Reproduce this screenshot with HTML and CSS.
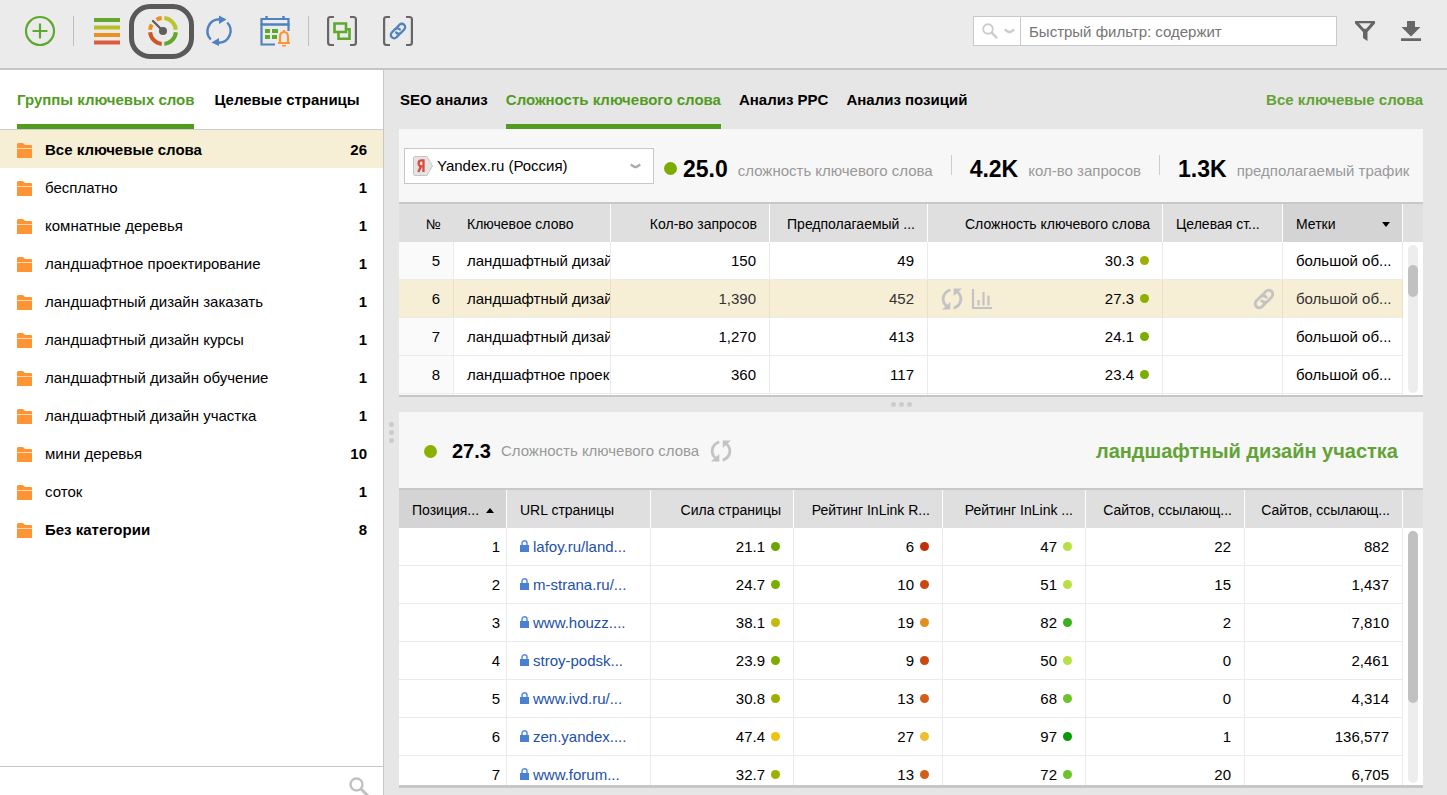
FILE: index.html
```html
<!DOCTYPE html>
<html lang="ru">
<head>
<meta charset="utf-8">
<title>Сложность ключевого слова</title>
<link rel="stylesheet" href="styles.css">
</head>
<body>
<svg class="defs" aria-hidden="true">
  <symbol id="folder" viewBox="0 0 15 15"><path fill="#ff9434" d="M0 1.5Q0 0 1.500 0h3.600q1 0 1.500.6L8 2h6q1 0 1 1v2H0z"/><path fill="#ffd9b5" d="M0 5h15v1H0z"/><path fill="#ff9434" d="M0 6h15v9H0z"/></symbol>
  <symbol id="lock" viewBox="0 0 9 12"><path fill="none" stroke="#5b8ed8" stroke-width="1.500" d="M2 6V3.300a2.500 2.500 0 0 1 5 0V6"/><path fill="#4a80d0" d="M0 5h9v7H0z"/></symbol>
  <symbol id="sync" viewBox="0 0 22 22"><g fill="none" stroke="#c3c3c3" stroke-width="2.800"><path d="M9.300 1.800C.2 5.500.8 14 5.500 18"/><path d="M12.700 20.200C21.800 16.500 21.200 8 16.500 4"/></g><path fill="#c3c3c3" d="M1 21.500h8.300V14zM21 .5h-8.300V8z"/></symbol>
  <symbol id="chain" viewBox="0 0 20 20"><g fill="none" stroke-width="2.600" stroke-linecap="round"><path d="M8.200 6.800l3.400-3.700a3.700 3.700 0 0 1 5.300 5.200L13.300 12a3.700 3.700 0 0 1-5.300-.4"/><path d="M11.800 13.200l-3.400 3.700a3.700 3.700 0 0 1-5.300-5.200L6.700 8a3.700 3.700 0 0 1 5.300.4"/></g></symbol>
  <symbol id="glass" viewBox="0 0 20 20"><circle cx="7.500" cy="7.500" r="6" fill="none" stroke="currentColor" stroke-width="2.400"/><path d="M11.800 11.800L18.800 18.800" stroke="currentColor" stroke-width="3"/></symbol>
  <symbol id="chevron" viewBox="0 0 12 6"><path fill="none" stroke="currentColor" stroke-width="2.600" d="M.8 1.300L4.500 3.700Q6 4.600 7.500 3.700L11.200 1.300"/></symbol>
</svg>

<header class="toolbar">
  <div class="tools">
    <button class="tool" aria-label="Добавить"><svg viewBox="0 0 32 32"><circle cx="16" cy="16" r="14" fill="none" stroke="#5fa82e" stroke-width="2.200"/><path d="M16 8.500v15M8.500 16h15" stroke="#5fa82e" stroke-width="2.200"/></svg></button>
    <span class="divider"></span>
    <button class="tool" aria-label="Группы"><svg viewBox="0 0 32 32"><path fill="#62a82f" d="M3 3h26v4H3z"/><path fill="#b9be29" d="M3 10.500h26v4H3z"/><path fill="#ec901f" d="M3 18h26v4H3z"/><path fill="#df5a3c" d="M3 25.500h26v4H3z"/></svg></button>
    <button class="tool tool-current" aria-label="Сложность"><svg viewBox="0 0 32 32"><g fill="none" stroke-width="4"><path stroke="#bcc32f" d="M17.300 3.100A13 13 0 0 1 28.900 14.700"/><path stroke="#62a82f" d="M28.900 17.300A13 13 0 0 1 17.300 28.900"/><path stroke="#cf5625" d="M14.700 28.900A13 13 0 0 1 3.100 17.300"/><path stroke="#ec8f22" d="M3.100 14.700A13 13 0 0 1 4.700 9.500M9.500 4.700A13 13 0 0 1 14.700 3.100"/></g><path d="M6 6L16 16" stroke="#5e5e5e" stroke-width="2.400" stroke-linecap="round"/><circle cx="16" cy="16" r="4" fill="#5e5e5e"/></svg></button>
    <button class="tool" aria-label="Обновить"><svg viewBox="0 0 32 32"><g fill="none" stroke="#4f82bf" stroke-width="2.400"><path d="M7.800 24.500A12 12 0 0 1 16 4.200"/><path d="M24.200 7.500A12 12 0 0 1 16 27.800"/></g><path fill="#4f82bf" d="M16 .5l7.500 4L16 9zM16 23l-7.500 4.500L16 31z"/></svg></button>
    <button class="tool" aria-label="Расписание"><svg viewBox="0 0 32 32"><g fill="none" stroke="#4f82bf"><path stroke-width="2.200" d="M16 29.500H2.500V4h27v12"/><path stroke-width="2.400" d="M1.500 9.500h29M7.500 1v4M24.500 1v4"/></g><path fill="#5fa82e" d="M6 14h5v4H6zM13 14h6v4h-6zM6 20h5v4H6zM13 20h5v4h-5z"/><path fill="none" stroke="#ff9434" stroke-width="2.200" d="M19 28h12M21 27v-5q0-5 4-5t4 5v5M25 17v-2"/><path fill="#ff9434" d="M23 30h4v1.500h-4z"/></svg></button>
    <span class="divider"></span>
    <button class="tool" aria-label="Сопоставить"><svg viewBox="0 0 32 32"><path fill="none" stroke="#666" stroke-width="2.200" d="M8 2H4.500Q2.100 2 2.100 4.500v23Q2.100 30 4.500 30H8M24 2h3.500Q29.900 2 29.900 4.500v23Q29.900 30 27.500 30H24"/><path fill="none" stroke="#5fa82e" stroke-width="2.600" d="M12.500 14.500v9.200h11v-9.500h-3"/><path fill="#ebebeb" stroke="#5fa82e" stroke-width="2.600" d="M8.500 8.500h11.500v8.500H8.500z"/></svg></button>
    <button class="tool" aria-label="Ссылка"><svg viewBox="0 0 32 32"><path fill="none" stroke="#666" stroke-width="2.200" d="M8 2H4.500Q2.100 2 2.100 4.500v23Q2.100 30 4.500 30H8M24 2h3.500Q29.900 2 29.900 4.500v23Q29.900 30 27.500 30H24"/><use href="#chain" x="7" y="7" width="18" height="18" stroke="#4f82bf"/></svg></button>
  </div>
  <div class="filter">
    <button class="filter-mode" aria-label="Режим фильтра"><svg class="i-glass"><use href="#glass"/></svg><svg class="i-chevron"><use href="#chevron"/></svg></button>
    <input class="filter-input" type="text" aria-label="Быстрый фильтр" placeholder="Быстрый фильтр: содержит">
  </div>
  <button class="action" aria-label="Фильтр"><svg viewBox="0 0 22 22"><path fill="#666" fill-rule="evenodd" d="M1 1h20v2.500L13.500 12v9L9 18v-6L1 3.500zM5 3.300l4.800 5.500h2.500L17 3.300z"/></svg></button>
  <button class="action" aria-label="Скачать"><svg viewBox="0 0 22 22"><path fill="#666" d="M7 1h8v6h5.500L11 16.500 1.500 7H7zM1 18.300h20V21H1z"/></svg></button>
</header>

<div class="workspace">
  <aside class="sidebar">
    <nav class="tabs side-tabs"><a class="tab active" href="#groups">Группы ключевых слов</a><a class="tab" href="#pages">Целевые страницы</a></nav>
    <ul class="groups">
      <li class="group selected strong"><svg><use href="#folder"/></svg><span>Все ключевые слова</span><b>26</b></li>
      <li class="group"><svg><use href="#folder"/></svg><span>бесплатно</span><b>1</b></li>
      <li class="group"><svg><use href="#folder"/></svg><span>комнатные деревья</span><b>1</b></li>
      <li class="group"><svg><use href="#folder"/></svg><span>ландшафтное проектирование</span><b>1</b></li>
      <li class="group"><svg><use href="#folder"/></svg><span>ландшафтный дизайн заказать</span><b>1</b></li>
      <li class="group"><svg><use href="#folder"/></svg><span>ландшафтный дизайн курсы</span><b>1</b></li>
      <li class="group"><svg><use href="#folder"/></svg><span>ландшафтный дизайн обучение</span><b>1</b></li>
      <li class="group"><svg><use href="#folder"/></svg><span>ландшафтный дизайн участка</span><b>1</b></li>
      <li class="group"><svg><use href="#folder"/></svg><span>мини деревья</span><b>10</b></li>
      <li class="group"><svg><use href="#folder"/></svg><span>соток</span><b>1</b></li>
      <li class="group strong"><svg><use href="#folder"/></svg><span>Без категории</span><b>8</b></li>
    </ul>
    <div class="side-footer"><button aria-label="Поиск"><svg><use href="#glass"/></svg></button></div>
  </aside>

  <div class="splitter-v"><i></i><i></i><i></i></div>

  <main class="main">
    <nav class="tabs main-tabs"><a class="tab" href="#seo">SEO анализ</a><a class="tab active" href="#difficulty">Сложность ключевого слова</a><a class="tab" href="#ppc">Анализ PPC</a><a class="tab" href="#rank">Анализ позиций</a><a class="all-link" href="#all">Все ключевые слова</a></nav>

    <section class="panel panel-top">
      <div class="summary">
        <div class="engine">
          <svg class="engine-icon" viewBox="0 0 20 20"><path fill="#e4e4e4" stroke="#c6c6c6" d="M2 .5h12l5.500 9.500L14 19.500H2Q.5 19.500.5 18V2Q.5.5 2 .5z"/><path fill="none" stroke="#dd4a3c" stroke-width="2.300" d="M10.500 16V4.300H8.500Q5.600 4.300 5.600 7.300T8.500 10.300h2M8 10.300L5.300 16"/></svg>
          <select class="engine-select" aria-label="Поисковая система"><option>Yandex.ru (Россия)</option></select>
          <svg class="engine-arrow i-chevron"><use href="#chevron"/></svg>
        </div>
        <div class="stat"><i class="dot big c24"></i><strong>25.0</strong><span>сложность ключевого слова</span></div>
        <div class="stat"><strong>4.2K</strong><span>кол-во запросов</span></div>
        <div class="stat"><strong>1.3K</strong><span>предполагаемый трафик</span></div>
      </div>
      <div class="scroll">
        <table class="grid keywords">
          <colgroup><col class="w55"><col class="w157"><col class="w159"><col class="w158"><col class="w235"><col class="w120"><col class="w120"><col class="w20"></colgroup>
          <thead><tr><th class="num plain">№</th><th>Ключевое слово</th><th class="num">Кол-во запросов</th><th class="num">Предполагаемый ...</th><th class="num">Сложность ключевого слова</th><th>Целевая ст...</th><th class="sorted"><span class="head">Метки<i class="down"></i></span></th><th class="end"></th></tr></thead>
          <tbody>
            <tr><td class="num idx">5</td><td class="clip">ландшафтный дизайн</td><td class="num">150</td><td class="num">49</td><td class="num">30.3<i class="dot c30"></i></td><td></td><td>большой об...</td><td class="end"></td></tr>
            <tr class="selected"><td class="num idx">6</td><td class="clip">ландшафтный дизайн</td><td class="num soft">1,390</td><td class="num soft">452</td><td class="num"><div class="metric"><svg class="i22"><use href="#sync"/></svg><svg class="i22" viewBox="0 0 22 22"><path fill="none" stroke="#c3c3c3" stroke-width="2.200" d="M2 1v19h19M7.500 17.500V12M12.500 17.500V4M17.500 17.500V7.500"/></svg><span>27.3<i class="dot c27"></i></span></div></td><td class="num tight"><svg class="i22 link-icon"><use href="#chain"/></svg></td><td class="soft">большой об...</td><td class="end"></td></tr>
            <tr><td class="num idx">7</td><td class="clip">ландшафтный дизайн</td><td class="num">1,270</td><td class="num">413</td><td class="num">24.1<i class="dot c24"></i></td><td></td><td>большой об...</td><td class="end"></td></tr>
            <tr><td class="num idx">8</td><td class="clip">ландшафтное проект</td><td class="num">360</td><td class="num">117</td><td class="num">23.4<i class="dot c24"></i></td><td></td><td>большой об...</td><td class="end"></td></tr>
            <tr><td class="idx"></td><td></td><td></td><td></td><td></td><td></td><td></td><td class="end"></td></tr>
          </tbody>
        </table>
        <div class="bar"><i class="thumb-small"></i></div>
      </div>
    </section>

    <div class="splitter-h"><i></i><i></i><i></i></div>

    <section class="panel panel-bottom">
      <div class="details"><i class="dot big c27"></i><strong>27.3</strong><span>Сложность ключевого слова</span><button aria-label="Обновить сложность"><svg class="i22"><use href="#sync"/></svg></button><h2>ландшафтный дизайн участка</h2></div>
      <div class="scroll">
        <table class="grid pages">
          <colgroup><col class="w108"><col class="w144"><col class="w143"><col class="w149"><col class="w143"><col class="w159"><col class="w158"><col class="w20"></colgroup>
          <thead><tr><th class="sorted"><span class="head">Позиция...<i class="up"></i></span></th><th>URL страницы</th><th class="num">Сила страницы</th><th class="num">Рейтинг InLink R...</th><th class="num">Рейтинг InLink ...</th><th class="num">Сайтов, ссылающ...</th><th class="num">Сайтов, ссылающ...</th><th class="end"></th></tr></thead>
          <tbody>
            <tr><td class="num pos">1</td><td><svg class="lock"><use href="#lock"/></svg><a href="#p1">lafoy.ru/land...</a></td><td class="num">21.1<i class="dot c21"></i></td><td class="num">6<i class="dot r6"></i></td><td class="num">47<i class="dot g50"></i></td><td class="num">22</td><td class="num">882</td><td class="end"></td></tr>
            <tr><td class="num pos">2</td><td><svg class="lock"><use href="#lock"/></svg><a href="#p2">m-strana.ru/...</a></td><td class="num">24.7<i class="dot c24"></i></td><td class="num">10<i class="dot r10"></i></td><td class="num">51<i class="dot g50"></i></td><td class="num">15</td><td class="num">1,437</td><td class="end"></td></tr>
            <tr><td class="num pos">3</td><td><svg class="lock"><use href="#lock"/></svg><a href="#p3">www.houzz....</a></td><td class="num">38.1<i class="dot c38"></i></td><td class="num">19<i class="dot r19"></i></td><td class="num">82<i class="dot g82"></i></td><td class="num">2</td><td class="num">7,810</td><td class="end"></td></tr>
            <tr><td class="num pos">4</td><td><svg class="lock"><use href="#lock"/></svg><a href="#p4">stroy-podsk...</a></td><td class="num">23.9<i class="dot c24"></i></td><td class="num">9<i class="dot r10"></i></td><td class="num">50<i class="dot g50"></i></td><td class="num">0</td><td class="num">2,461</td><td class="end"></td></tr>
            <tr><td class="num pos">5</td><td><svg class="lock"><use href="#lock"/></svg><a href="#p5">www.ivd.ru/...</a></td><td class="num">30.8<i class="dot c30"></i></td><td class="num">13<i class="dot r13"></i></td><td class="num">68<i class="dot g70"></i></td><td class="num">0</td><td class="num">4,314</td><td class="end"></td></tr>
            <tr><td class="num pos">6</td><td><svg class="lock"><use href="#lock"/></svg><a href="#p6">zen.yandex....</a></td><td class="num">47.4<i class="dot c47"></i></td><td class="num">27<i class="dot r27"></i></td><td class="num">97<i class="dot g97"></i></td><td class="num">1</td><td class="num">136,577</td><td class="end"></td></tr>
            <tr><td class="num pos">7</td><td><svg class="lock"><use href="#lock"/></svg><a href="#p7">www.forum...</a></td><td class="num">32.7<i class="dot c30"></i></td><td class="num">13<i class="dot r13"></i></td><td class="num">72<i class="dot g70"></i></td><td class="num">20</td><td class="num">6,705</td><td class="end"></td></tr>
          </tbody>
        </table>
        <div class="bar"><i class="thumb-large"></i></div>
      </div>
    </section>
  </main>
</div>
</body>
</html>
```
FILE: styles.css
```css
* { box-sizing: border-box; }
body {
  margin: 0;
  height: 100vh;
  display: flex;
  flex-direction: column;
  overflow: hidden;
  background: #e6e6e6;
  color: #000;
  font: 15px/20px "Liberation Sans", Arial, sans-serif;
}
.defs { position: absolute; width: 0; height: 0; }
svg { display: block; flex: none; }
button { padding: 0; border: 0; background: none; color: inherit; font: inherit; }
a { text-decoration: none; color: inherit; }

/* Toolbar */
.toolbar {
  display: flex;
  align-items: center;
  flex: none;
  height: 70px;
  padding: 0 25px 6px 24px;
  background: #ebebeb;
  border-bottom: 2px solid #c4c4c4;
}
.tools { display: flex; align-items: center; gap: 24px; margin-right: auto; }
.tool { position: relative; width: 32px; height: 32px; }
.tool svg { width: 32px; height: 32px; }
.tool-current::after {
  content: "";
  position: absolute;
  inset: -11px -15px -12px -18px;
  border: 5px solid #595959;
  border-radius: 21px;
}
.divider { width: 1px; height: 30px; margin: 0 -7px; background: #bfbfbf; }
.filter {
  display: flex;
  width: 364px;
  height: 30px;
  margin-right: 17px;
  background: #fff;
  border: 1px solid #c9c9c9;
}
.filter-mode {
  display: flex;
  align-items: center;
  gap: 6px;
  width: 47px;
  padding-left: 8px;
  color: #ccc;
  border-right: 1px solid #c9c9c9;
}
.i-glass { width: 16px; height: 16px; }
.i-chevron { width: 11px; height: 6px; }
.filter-input {
  flex: 1;
  min-width: 0;
  padding: 2px 8px 0;
  border: 0;
  outline: 0;
  background: none;
  font: inherit;
}
.filter-input::placeholder { color: #757575; opacity: 1; }
.action { width: 22px; height: 22px; }
.action + .action { margin-left: 24px; }

/* Workspace */
.workspace { display: flex; flex: 1; min-height: 0; }
.sidebar {
  display: flex;
  flex-direction: column;
  flex: none;
  width: 384px;
  background: #fff;
  border-right: 1px solid #c8c8c8;
}
.tabs { display: flex; flex: none; font-weight: bold; }
.tab { padding: 20px 0 14px; border-bottom: 5px solid transparent; white-space: nowrap; }
.tab.active { color: #519c1e; border-color: #519c1e; }
.side-tabs { gap: 20px; padding-left: 17px; border-bottom: 1px solid #ccc; }
.main-tabs { gap: 18px; padding-left: 1px; }
.all-link { margin-left: auto; padding-top: 20px; color: #63a336; }

.groups { flex: 1; min-height: 0; margin: 0; padding: 0; list-style: none; overflow: hidden; }
.group { display: flex; align-items: center; height: 38px; padding: 2px 16px 0 17px; }
.group svg { width: 15px; height: 15px; margin-right: 13px; }
.group b { margin-left: auto; }
.strong { font-weight: bold; }
.selected { background: #f7eed6; }
.side-footer {
  display: flex;
  justify-content: flex-end;
  flex: none;
  height: 29px;
  padding: 10px 14px 0 0;
  border-top: 1px solid #c8c8c8;
  color: #c0c0c0;
  overflow: hidden;
}
.side-footer svg { width: 20px; height: 20px; }

.splitter-v {
  display: flex;
  flex-direction: column;
  align-items: center;
  justify-content: center;
  flex: none;
  gap: 3px;
  width: 15px;
}
.splitter-h { display: flex; align-items: center; justify-content: center; flex: none; gap: 3px; height: 15px; padding-right: 20px; }
.splitter-v i, .splitter-h i { width: 5px; height: 5px; border-radius: 50%; background: #cbcbcb; }

/* Panels */
.main { display: flex; flex-direction: column; flex: 1; min-width: 0; padding: 0 24px 7px 0; }
.panel { display: flex; flex-direction: column; background: #fff; border-bottom: 2px solid #c6c6c6; }
.panel-top { flex: none; height: 268px; }
.panel-bottom { flex: 1; min-height: 0; border-bottom-width: 3px; }

.summary {
  display: flex;
  align-items: center;
  flex: none;
  height: 75px;
  padding: 0 0 0 5px;
  background: #f7f7f7;
  border-bottom: 2px solid #c8c8c8;
  white-space: nowrap;
}
.engine { position: relative; flex: none; width: 250px; margin-right: 10px; }
.engine-icon { position: absolute; left: 9px; top: 8px; width: 20px; height: 20px; }
.engine-arrow { position: absolute; right: 13px; top: 15px; color: #aaa; pointer-events: none; }
.engine-select {
  display: block;
  width: 100%;
  height: 36px;
  padding: 0 30px 0 32px;
  border: 1px solid #c8c8c8;
  border-radius: 0;
  background: #fff;
  color: #000;
  font: inherit;
  appearance: none;
}
.stat { display: flex; align-items: center; height: 36px; padding-top: 6px; }
.stat strong { font-size: 23px; line-height: 24px; }
.stat span { margin-left: 10px; padding-top: 5px; color: #999; }
.stat + .stat::before { content: ""; width: 1px; height: 20px; margin: -8px 18px 0; background: #ccc; }

.details {
  display: flex;
  align-items: center;
  flex: none;
  height: 78px;
  padding: 2px 25px 0;
  background: #f7f7f7;
  border-bottom: 2px solid #c8c8c8;
}
.details strong { margin: 0 10px 0 9px; font-size: 20px; }
.details span { color: #999; }
.details button { margin-left: 11px; }
.details h2 { margin: 0 0 0 auto; color: #63a336; font-size: 20px; }

.dot { display: inline-block; width: 9px; height: 9px; margin-left: 6px; border-radius: 50%; vertical-align: 1px; }
.dot.big { width: 13px; height: 13px; margin: 0 6px 0 0; }
.c21 { background: #6ba600; }
.c24 { background: #7bad00; }
.c27 { background: #8bb000; }
.c30 { background: #9db000; }
.c38 { background: #c5ba0c; }
.c47 { background: #f0c20a; }
.r6 { background: #c32d08; }
.r10 { background: #ca4710; }
.r13 { background: #d35e18; }
.r19 { background: #e08f20; }
.r27 { background: #edc02c; }
.g50 { background: #b9e043; }
.g70 { background: #6cc42a; }
.g82 { background: #3db11c; }
.g97 { background: #0a9a08; }

/* Tables */
.scroll { position: relative; flex: 1; min-height: 0; overflow: hidden; }
.grid { width: 100%; table-layout: fixed; border-collapse: separate; border-spacing: 0; }
.w20 { width: 20px; }
.w55 { width: 55px; }
.w108 { width: 108px; }
.w120 { width: 120px; }
.w143 { width: 143px; }
.w144 { width: 144px; }
.w149 { width: 149px; }
.w157 { width: 157px; }
.w158 { width: 158px; }
.w159 { width: 159px; }
.w235 { width: 235px; }
.grid th, .grid td {
  height: 38px;
  padding: 0 12px 0 13px;
  overflow: hidden;
  text-align: left;
  font-weight: normal;
  white-space: nowrap;
}
.grid th { padding-top: 2px; background: #dfdfdf; border-right: 1px solid #fff; font-size: 14px; }
.grid th.sorted { background: #d4d4d4; }
.grid td { border-right: 1px solid #ebebeb; border-bottom: 1px solid #ebebeb; }
.grid .num { text-align: right; }
.grid td.num { padding-right: 13px; }
.grid th.plain { border-right-color: #dfdfdf; }
.grid th.end, .grid td.end { padding: 0; border: 0; }
.grid td.end { background: #fff; }
.grid td.clip { padding-right: 0; }
.grid td.pos { padding-right: 6px; }
.grid td.tight { padding-right: 7px; }
.idx { background: #fafafa; }
.selected td { background: #f7eed6; border-right-color: #ebe1c2; }
.soft { color: #333; }
.head { display: flex; align-items: center; justify-content: space-between; }
.up, .down { border: 4px solid transparent; }
.down { border-top: 5px solid #000; border-bottom: 0; }
.up { border-bottom: 5px solid #000; border-top: 0; }
.metric { display: flex; align-items: center; gap: 8px; }
.metric span { margin-left: auto; }
.i22 { width: 22px; height: 22px; }
.link-icon { display: inline-block; vertical-align: middle; stroke: #c3c3c3; }
.pages a { color: #1c4fa8; }
.lock { display: inline-block; width: 9px; height: 12px; margin-right: 4px; }
.bar { position: absolute; top: 41px; right: 5px; bottom: 2px; width: 10px; border-radius: 5px; background: #ededed; }
.bar i { display: block; border-radius: 5px; background: #c1c1c1; }
.thumb-small { height: 32px; margin-top: 20px; }
.thumb-large { height: 172px; }
```
